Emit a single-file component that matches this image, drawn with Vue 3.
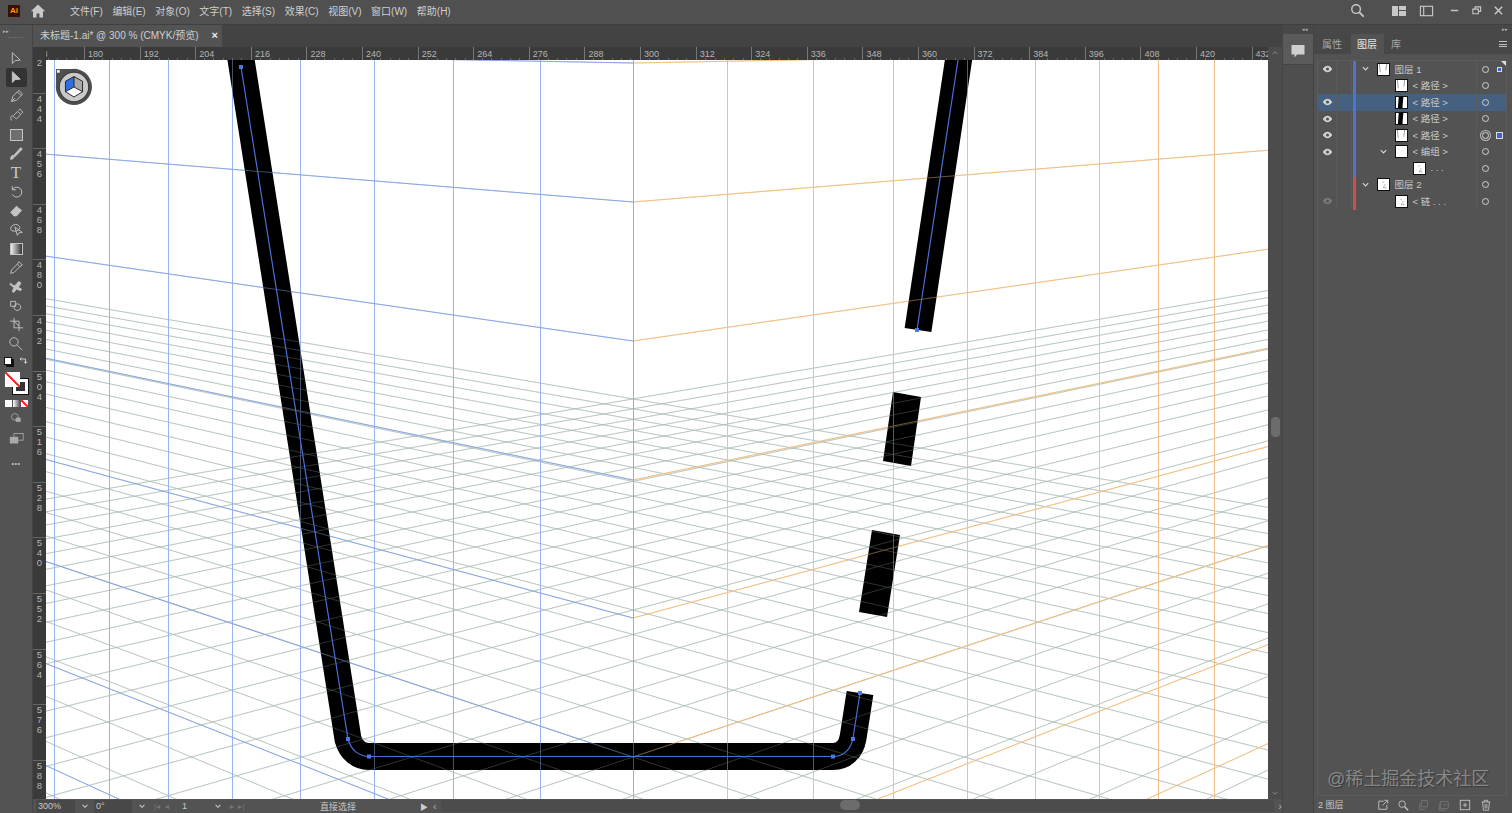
<template>
  <div class="app">
    <header class="titlebar">
      <div class="logo">Ai</div>
      <svg class="home" viewBox="0 0 16 16"><path d="M8 1.500 0.800 8.200h2.200V14.500h3.600v-4h2.800v4H13V8.200h2.200z" /></svg>
      <nav class="menu">
        <span v-for="item in menus" :key="item">{{ item }}</span>
      </nav>
      <div class="title-right">
        <svg class="ticon search" viewBox="0 0 16 16"><circle cx="6.500" cy="6.500" r="4.600" /><path d="M10 10l4.600 4.600" stroke-width="2" /></svg>
        <svg class="ticon layout" viewBox="0 0 16 14"><path class="solid" d="M1 2h6v10H1zM8 2h7v4H8zM8 7h7v5H8z" /></svg>
        <svg class="ticon window" viewBox="0 0 16 14"><rect x="1.500" y="2" width="13" height="10" /><path d="M5 2v10" /></svg>
        <svg class="ticon wbtn" viewBox="0 0 12 12"><path d="M2 6h8" stroke-width="1.600" /></svg>
        <svg class="ticon wbtn" viewBox="0 0 12 12"><path d="M2 4.500h6v5H2zM4.500 4.500V2h6v5H8" /></svg>
        <svg class="ticon wbtn last" viewBox="0 0 12 12"><path d="M2 2l8 8M10 2l-8 8" stroke-width="1.600" /></svg>
      </div>
    </header>

    <div class="body">
      <aside class="toolbar">
        <div class="collapse">▸▸</div>
        <div class="grip"></div>
        <div
          v-for="(tool, i) in tools"
          :key="i"
          class="tool"
          :class="{ active: i === 1 }"
        >
          <svg v-if="tool.d" viewBox="0 0 18 18" :class="{ filled: tool.filled }"><path :d="tool.d" /></svg>
          <div v-else-if="tool.box" class="tool-box" :class="tool.box"></div>
          <span v-else class="tool-t">T</span>
        </div>
        <div class="swap-row">
          <div class="mini-default"></div>
          <svg class="swap" viewBox="0 0 10 10"><path d="M2 3h5.500v4M6 5.500 7.500 7.500 9 5.500M3.500 1.500 2 3l1.500 1.500" /></svg>
        </div>
        <div class="fillstroke">
          <div class="stroke-box"></div>
          <div class="fill-box"></div>
        </div>
        <div class="modes">
          <i class="m-white"></i><i class="m-grad"></i><i class="m-none"></i>
        </div>
        <svg class="extra lock" viewBox="0 0 18 18"><circle cx="7" cy="7" r="4" /><rect class="solid" x="8" y="8" width="6" height="5" /></svg>
        <svg class="extra screens" viewBox="0 0 18 18"><rect x="6" y="3" width="11" height="8" /><rect class="solid" x="1" y="7" width="10" height="8" /></svg>
        <div class="more">•••</div>
      </aside>

      <main class="center">
        <div class="tabs">
          <div class="tab">
            <span>未标题-1.ai* @ 300 % (CMYK/预览)</span>
            <b>×</b>
          </div>
        </div>

        <div class="work">
          <div class="docarea">
            <div class="hruler">
              <div class="corner"></div>
              <div class="hticks">
                <div v-for="n in hLabels" :key="n" class="hcell">{{ n }}</div>
              </div>
            </div>
            <div class="mid">
              <div class="vruler">
                <div v-for="n in vLabels" :key="n" class="vcell">
                  <span v-for="(c, i) in String(n)" :key="i">{{ c }}</span>
                </div>
              </div>
              <div class="canvas">
                <svg class="art" viewBox="46 60 1222 739" width="1222" height="739">
                  <defs>
                    <g id="persp-grid" fill="none">
                      <line v-for="(l, i) in groundLines" :key="'g' + i" :x1="l.x1" :y1="l.y1" :x2="l.x2" :y2="l.y2" stroke="#a3b5ab" stroke-opacity="0.7" stroke-width="0.9" />
                      <line v-for="x in blueV" :key="'bv' + x" :x1="x + 0.5" y1="60" :x2="x + 0.5" y2="799" stroke="#97b4ee" />
                      <line v-for="x in orangeV" :key="'ov' + x" :x1="x + 0.5" y1="60" :x2="x + 0.5" y2="799" stroke="#f0c088" />
                      <line v-for="(l, i) in blueWall" :key="'bw' + i" :x1="l.x1" :y1="l.y1" :x2="l.x2" :y2="l.y2" stroke="#8ba8e4" />
                      <line v-for="(l, i) in orangeWall" :key="'ow' + i" :x1="l.x1" :y1="l.y1" :x2="l.x2" :y2="l.y2" stroke="#f2c084" />
                      <line x1="633.500" y1="60" x2="633.500" y2="799" stroke="#dca060" />
                    </g>
                  </defs>

                  <use href="#persp-grid" />

                  <g fill="none" stroke="#000" stroke-width="27">
                    <path d="M239.500 50 348 739C351 750 359 756.500 369 756.500H833C844 756.500 851 749 853 738L860 693" />
                    <path d="M960 50 918 330" />
                  </g>
                  <polygon points="893,392 921,397 911,466 883,461" />
                  <polygon points="872,530 900,535 887,617 859,612" />

                  <!-- the grid stays faintly visible through the artwork -->
                  <use href="#persp-grid" opacity="0.45" />

                  <g fill="none" stroke="#4a6fd8" stroke-width="1.200">
                    <path d="M241 67 348 739C351 750 359 756.500 369 756.500H833C844 756.500 851 749 853 738L860 693" />
                    <path d="M958 60 917 330" />
                  </g>
                  <g fill="#4a78dc">
                    <rect v-for="(p, i) in anchors" :key="i" :x="p[0] - 2" :y="p[1] - 2" width="4" height="4" />
                  </g>
                </svg>

                <svg class="plane-widget" viewBox="0 0 40 40">
                  <path d="M1 1h17a19 19 0 1 1-17 17z" fill="#4e4e4e" />
                  <circle cx="20" cy="20" r="15.500" fill="#c9c9c9" stroke="#3a3a3a" stroke-width="1.200" />
                  <path d="M20 9 29 14V25L20 20z" fill="#a9a9a9" />
                  <path d="M20 9 11 14V25L20 20z" fill="#2f6fe0" />
                  <path d="M20 20 29 25 20 30.500 11 25z" fill="#fff" />
                  <path d="M20 9 29 14V25L20 30.500 11 25V14zM20 9V20M11 25 20 20 29 25" fill="none" stroke="#222" stroke-width="1" />
                  <rect x="2" y="2" width="3" height="3" fill="#eee" />
                </svg>
              </div>
            </div>
          </div>
          <div class="vscroll">
            <svg viewBox="0 0 10 6"><path d="M2 5 5 2 8 5" /></svg>
            <div class="vthumb"></div>
            <svg viewBox="0 0 10 6"><path d="M2 1 5 4 8 1" /></svg>
          </div>
        </div>

        <footer class="status">
          <div class="field zoom">300%</div>
          <svg class="chev" viewBox="0 0 10 6"><path d="M2 1 5 4 8 1" /></svg>
          <div class="field rot">0°</div>
          <svg class="chev" viewBox="0 0 10 6"><path d="M2 1 5 4 8 1" /></svg>
          <span class="nav dim">|◂ &nbsp;◂</span>
          <span class="page">1</span>
          <svg class="chev" viewBox="0 0 10 6"><path d="M2 1 5 4 8 1" /></svg>
          <span class="nav dim">▸ &nbsp;▸|</span>
          <span class="mode">直接选择</span>
          <span class="nav play">▶</span>
          <span class="lt">‹</span>
          <div class="hscroll"><div class="hthumb"></div></div>
          <span class="rt">›</span>
        </footer>
      </main>

      <aside class="dock">
        <div class="dock-head">◂◂</div>
        <div class="comment">
          <svg viewBox="0 0 16 16"><path d="M1.500 2h13v9.500H7L4.500 14.500V11.500h-3z" /></svg>
        </div>
      </aside>

      <section class="panel">
        <div class="panel-head">▸▸</div>
        <div class="panel-tabs">
          <span>属性</span>
          <span class="on">图层</span>
          <span>库</span>
          <div class="burger"><i></i><i></i><i></i></div>
        </div>
        <div class="layers">
          <div
            v-for="(row, i) in rows"
            :key="i"
            class="row"
            :class="{ sel: row.sel }"
          >
            <div class="eye">
              <svg v-if="row.eye" viewBox="0 0 14 10" :class="{ faint: row.eye === 'dim' }">
                <path d="M1 5C3 2 5 1 7 1s4 1 6 4C11 8 9 9 7 9S3 8 1 5z" />
                <circle cx="7" cy="5" r="2" fill="#535353" />
              </svg>
            </div>
            <div class="lock-cell"></div>
            <i class="bar" :class="row.color"></i>
            <div class="content" :style="{ paddingLeft: 3 + row.level * 18 + 'px' }">
              <div class="arrow">
                <svg v-if="row.open" viewBox="0 0 10 6"><path d="M2 1 5 4 8 1" /></svg>
              </div>
              <div class="thumb">
                <svg v-if="row.thumb" viewBox="0 0 12 12">
                  <path v-if="row.thumb === 'black'" d="M3 0h5L7 12H2z" />
                  <path v-else-if="row.thumb === 'line'" d="M1 0 2 9h1L2 0zM9 0 8 7h1l1-7z" fill="#999" />
                  <path v-else d="M5 3h1v1H5zM7 6h1v1H7zM6 8h1v2H6zM8 9h1v1H8z" fill="#777" />
                </svg>
              </div>
              <span class="name">{{ row.name }}</span>
            </div>
            <div class="target"><i :class="{ double: row.double }"></i></div>
            <div class="mark"><i v-if="row.mark" :class="{ small: row.mark === 'small' }"></i></div>
          </div>
          <div class="watermark">@稀土掘金技术社区</div>
        </div>
        <div class="panel-foot">
          <span class="count">2 图层</span>
          <svg viewBox="0 0 14 14"><path d="M8 2.500H2v9.500h9.500V7M6.500 7.500 12 2M8.500 1.500H12.500V5.500" /></svg>
          <svg viewBox="0 0 14 14"><circle cx="6" cy="6" r="3.800" /><path d="M9 9l4 4" stroke-width="1.600" /></svg>
          <svg class="off" viewBox="0 0 14 14"><path d="M4 2h7v7H4zM2 5v7h7" /></svg>
          <svg class="off" viewBox="0 0 14 14"><path d="M3 3h9v8H3zM6 7h4M1.500 5v8h8" /></svg>
          <svg viewBox="0 0 14 14"><rect x="1.500" y="1.500" width="11" height="11" /><path d="M7 4.500v5M4.500 7h5" /></svg>
          <svg viewBox="0 0 14 14"><path d="M2 3.500h10M5 3.500V1.500h4v2M3 3.500 4 13h6l1-9.500M6 6v5M8 6v5" /></svg>
        </div>
      </section>
    </div>
  </div>
</template>

<script setup>
const menus = ["文件(F)", "编辑(E)", "对象(O)", "文字(T)", "选择(S)", "效果(C)", "视图(V)", "窗口(W)", "帮助(H)"];

const tools = [
  { d: "M4 2v13l3.500-3.500 6-.5z" },
  { d: "M4 2v13l3.500-3.500 6-.5z", filled: true },
  { d: "M3 15l1.500-6L10 3.500 14.500 8 9 13.500zM3 15l4-4M10 3.500 12 1.500 16 6 14.500 8" },
  { d: "M3 15c-2-4 0-7 2-5s4 3 4 3l5-5-3.500-4-5 5M11 3l2-2 3.500 4-2 2" },
  { box: "rect" },
  { d: "M2 16c0-3 1-5 3-5l1 2c0 2-2 3-4 3zM6 11 14 2l2 1.500L7 13z", filled: true },
  {},
  { d: "M4 7a6 6 0 1 1 0 5.500M4 2.500V7h4.500" },
  { d: "M2 11l7-7 6 5-6 6.500H6zM5.500 8l6 5", filled: true },
  { d: "M2 8c0-3 3-5 6-5s5 2 5 4-3 4-6 4-5-1-5-3zM7 6l3 10 2-3 4-.5z" },
  { box: "grad" },
  { d: "M2 16l1-4 7-7 3 3-7 7zM10 5l2-3 4 4-3 2" },
  { d: "M2 5c2 2 3 3 5 3l3-3a2 2 0 1 1 3 2l-2 3 4 2-1 2-5-2-3 4-2-1 2-5c-2-1-4-2-5-4z", filled: true },
  { d: "M2 4h6v6H2zM10 7a4 4 0 1 0 .01 0z" },
  { d: "M6 1v12h11M1 5h11v12M6 5l6 6" },
  { d: "M11 7a5 5 0 1 1-10 0 5 5 0 0 1 10 0zM10 11l6 6" },
];

// labels run every 12 pt of the ruler
const hLabels = [];
for (let n = 168; n <= 432; n += 12) hLabels.push(n);
const vLabels = [];
for (let n = 432; n <= 588; n += 12) vLabels.push(n);

const blueV = [54, 109, 168, 232, 300, 374, 453, 540];
const orangeV = [727, 813, 893, 967, 1035, 1099, 1158, 1214];

// both vanishing points sit on the same horizon, mirrored round x = 633
const HORIZON = 22;
const slopeAt = (c) => 0.000453 * (c - HORIZON);
const LEFT = 46;
const RIGHT = 1268;
const CORNER = 633;

const wallC = [63, 202, 341, 480, 618, 757, 896, 1035, 1174];
const blueWall = wallC.map((c) => ({
  x1: LEFT,
  y1: c - slopeAt(c) * (CORNER - LEFT),
  x2: CORNER,
  y2: c,
}));
const orangeWall = wallC.map((c) => ({
  x1: CORNER,
  y1: c,
  x2: RIGHT,
  y2: c - slopeAt(c) * (RIGHT - CORNER),
}));

const groundLines = [];
for (let m = 19.5; m >= 3; m -= 0.5) {
  const c = HORIZON + 7350 / m;
  const s = slopeAt(c);
  groundLines.push({ x1: LEFT, y1: c - s * (CORNER - LEFT), x2: RIGHT, y2: c + s * (RIGHT - CORNER) });
  groundLines.push({ x1: LEFT, y1: c + s * (CORNER - LEFT), x2: RIGHT, y2: c - s * (RIGHT - CORNER) });
}

const anchors = [
  [241, 67],
  [348, 739],
  [369, 756.5],
  [833, 756.5],
  [853, 739],
  [860, 693],
  [917, 330],
];

const rows = [
  { name: "图层 1", eye: true, color: "blue", level: 0, open: true, thumb: "line", mark: "small" },
  { name: "< 路径 >", color: "blue", level: 1, thumb: "line" },
  { name: "< 路径 >", eye: true, color: "blue", level: 1, thumb: "black", sel: true },
  { name: "< 路径 >", eye: true, color: "blue", level: 1, thumb: "black" },
  { name: "< 路径 >", eye: true, color: "blue", level: 1, thumb: "line", double: true, mark: "big" },
  { name: "< 编组 >", eye: true, color: "blue", level: 1, open: true },
  { name: ". . .", color: "blue", level: 2, thumb: "dots" },
  { name: "图层 2", color: "red", level: 0, open: true, thumb: "dots" },
  { name: "< 链 . . .", eye: "dim", color: "red", level: 1, thumb: "dots" },
];
</script>

<style>
html,
body {
  margin: 0;
  overflow: hidden;
  background: #535353;
}
</style>

<style scoped>
.app {
  display: flex;
  flex-direction: column;
  width: 1512px;
  height: 813px;
  overflow: hidden;
  background: #535353;
  color: #d0d0d0;
  font-family: "Liberation Sans", "Noto Sans CJK SC", sans-serif;
  font-size: 10px;
}

svg {
  display: block;
}

/* title bar */
.titlebar {
  display: flex;
  align-items: center;
  flex: 0 0 25px;
  box-sizing: border-box;
  padding-bottom: 3px;
  background: #505050;
  border-bottom: 1px solid #3f3f3f;
}
.logo {
  width: 12px;
  height: 12px;
  margin-left: 8px;
  background: #3a0f05;
  color: #ff9a00;
  font-size: 8px;
  font-weight: bold;
  line-height: 12px;
  text-align: center;
  border-radius: 1px;
}
.home {
  width: 16px;
  height: 16px;
  margin-left: 10px;
  fill: #c8c8c8;
}
.menu {
  display: flex;
  gap: 9.600px;
  margin-left: 24px;
  color: #cfcfcf;
  font-size: 10px;
}
.title-right {
  display: flex;
  align-items: center;
  margin-left: auto;
}
.ticon {
  fill: none;
  stroke: #c8c8c8;
  stroke-width: 1.200;
}
.ticon .solid {
  fill: #c8c8c8;
  stroke: none;
}
.search {
  width: 15px;
  height: 15px;
  margin-right: 26px;
  stroke-width: 1.500;
}
.layout {
  width: 16px;
  height: 14px;
  margin-right: 12px;
}
.window {
  width: 15px;
  height: 14px;
  margin-right: 15px;
}
.wbtn {
  width: 11px;
  height: 11px;
  margin-right: 11px;
}
.wbtn.last {
  margin-right: 8px;
}

.body {
  display: flex;
  flex: 1;
  min-height: 0;
}

/* left tools */
.toolbar {
  display: flex;
  flex-direction: column;
  align-items: center;
  flex: 0 0 32px;
  border-right: 1px solid #444;
}
.collapse {
  align-self: flex-start;
  height: 8px;
  margin: 2px 0 0 3px;
  font-size: 5px;
  color: #bbb;
  line-height: 8px;
}
.grip {
  width: 16px;
  height: 2px;
  margin: 2px 0 9px;
  border-top: 1px dotted #6e6e6e;
}
.tool {
  display: flex;
  align-items: center;
  justify-content: center;
  width: 21px;
  height: 19px;
  border-radius: 2px;
}
.tool.active {
  background: #333;
}
.tool svg {
  width: 15px;
  height: 15px;
  fill: none;
  stroke: #c4c4c4;
  stroke-width: 1.100;
}
.tool svg.filled {
  fill: #c4c4c4;
}
.tool-box {
  width: 11px;
  height: 10px;
  border: 1px solid #c4c4c4;
}
.tool-box.rect {
  background: #6e6e6e;
}
.tool-box.grad {
  background: linear-gradient(to right, #eee, #333);
}
.tool-t {
  color: #c8c8c8;
  font-family: "Liberation Serif", serif;
  font-size: 17px;
  line-height: 19px;
}
.swap-row {
  display: flex;
  align-items: center;
  justify-content: space-between;
  width: 24px;
  margin-top: 3px;
}
.mini-default {
  width: 6px;
  height: 6px;
  background: #fff;
  border: 1px solid #111;
  box-shadow: 2px 2px 0 #111;
}
.swap {
  width: 10px;
  height: 10px;
  fill: none;
  stroke: #ccc;
}
.fillstroke {
  position: relative;
  width: 23px;
  height: 22px;
  margin-top: 6px;
}
.fill-box {
  position: absolute;
  left: 0;
  top: 0;
  width: 15px;
  height: 15px;
  background: linear-gradient(to top right, #fff 44%, #e33 44%, #e33 56%, #fff 56%);
}
.stroke-box {
  position: absolute;
  right: 0;
  bottom: 0;
  width: 9px;
  height: 9px;
  border: 3px solid #fff;
  outline: 1px solid #111;
  background: #333;
}
.modes {
  display: flex;
  gap: 1px;
  margin-top: 6px;
}
.modes i {
  width: 7px;
  height: 7px;
}
.m-white {
  background: #fff;
}
.m-grad {
  background: linear-gradient(to right, #fff, #555);
}
.m-none {
  background: linear-gradient(to top right, #fff 42%, #e33 42%, #e33 58%, #fff 58%);
}
.extra {
  width: 15px;
  height: 15px;
  fill: none;
  stroke: #aaa;
}
.extra .solid {
  fill: #aaa;
  stroke: none;
}
.lock {
  margin-top: 4px;
}
.screens {
  margin-top: 5px;
}
.more {
  margin-top: 14px;
  font-size: 7px;
  letter-spacing: 0.5px;
  color: #c4c4c4;
}

/* centre */
.center {
  display: flex;
  flex-direction: column;
  flex: 0 0 1249px;
  min-width: 0;
}
.tabs {
  display: flex;
  flex: 0 0 22px;
  background: #434343;
}
.tab {
  display: flex;
  align-items: center;
  justify-content: space-between;
  width: 189px;
  padding: 0 4px 3px 7px;
  box-sizing: border-box;
  background: #535353;
  color: #cfcfcf;
  font-size: 10px;
  white-space: nowrap;
}
.tab b {
  font-size: 11px;
  color: #eee;
}
.work {
  display: flex;
  flex: 1;
  min-height: 0;
}
.docarea {
  display: flex;
  flex-direction: column;
  flex: 0 0 1235px;
  min-width: 0;
}
.hruler {
  display: flex;
  flex: 0 0 13px;
  background: #3a3a3a;
  overflow: hidden;
}
.corner {
  position: relative;
  z-index: 1;
  flex: 0 0 13px;
  background: #3a3a3a;
  border-right: 1px solid #2e2e2e;
  box-sizing: border-box;
}
.hticks {
  display: flex;
  margin-left: -17.500px;
}
.hcell {
  flex: 0 0 55.600px;
  box-sizing: border-box;
  height: 13px;
  padding-left: 3px;
  border-left: 1px solid #777;
  color: #b5b5b5;
  font-size: 9px;
  line-height: 14px;
  background: repeating-linear-gradient(to right, transparent 0, transparent 8.300px, #6a6a6a 8.300px, #6a6a6a 9.300px) bottom / 100% 2px no-repeat;
}
.mid {
  display: flex;
  flex: 1;
  min-height: 0;
}
.vruler {
  flex: 0 0 13px;
  background: #3a3a3a;
  overflow: hidden;
}
.vcell {
  display: flex;
  flex-direction: column;
  align-items: center;
  box-sizing: border-box;
  height: 55.600px;
  border-top: 1px solid #666;
  color: #b5b5b5;
  font-size: 9.500px;
  line-height: 10px;
}
.vcell:first-child {
  margin-top: -23px;
}
.canvas {
  position: relative;
  flex: 1;
  background: #fff;
  overflow: hidden;
}
.plane-widget {
  position: absolute;
  left: 9px;
  top: 8px;
  width: 38px;
  height: 38px;
}
.vscroll {
  display: flex;
  flex-direction: column;
  align-items: center;
  justify-content: space-between;
  flex: 0 0 14px;
  padding: 3px 0;
  box-sizing: border-box;
  background: #4c4c4c;
}
.vscroll svg {
  width: 8px;
  height: 5px;
  fill: none;
  stroke: #999;
}
.vthumb {
  width: 9px;
  height: 20px;
  border-radius: 4px;
  background: #6c6c6c;
  margin-top: 8px;
}
.status {
  display: flex;
  align-items: center;
  flex: 0 0 14px;
  color: #c8c8c8;
  font-size: 9px;
  white-space: nowrap;
}
.field {
  box-sizing: border-box;
  height: 13px;
  padding-left: 2px;
  background: #484848;
  line-height: 13px;
}
.zoom {
  width: 39px;
  margin-left: 3px;
}
.rot {
  width: 38px;
}
.chev {
  flex: 0 0 auto;
  width: 8px;
  height: 5px;
  margin: 0 5px 0 6px;
  fill: none;
  stroke: #ccc;
  stroke-width: 1.300;
}
.nav {
  font-size: 8px;
}
.dim {
  margin-left: 3px;
  color: #777;
  width: 26px;
}
.page {
  width: 26px;
  margin-left: 2px;
}
.mode {
  width: 164px;
  box-sizing: border-box;
  padding-left: 64px;
}
.play {
  color: #ccc;
  width: 13px;
}
.lt,
.rt {
  color: #aaa;
  font-size: 11px;
  line-height: 12px;
}
.hscroll {
  display: flex;
  justify-content: center;
  flex: 1;
  height: 12px;
  background: #4c4c4c;
  margin: 0 4px;
}
.hthumb {
  width: 20px;
  height: 10px;
  border-radius: 5px;
  background: #6c6c6c;
  margin-left: -16px;
}

/* right dock */
.dock {
  flex: 0 0 32px;
  border-left: 1px solid #444;
  border-right: 1px solid #444;
  box-sizing: border-box;
  background: #4e4e4e;
}
.dock-head {
  height: 9px;
  font-size: 5px;
  line-height: 9px;
  text-align: right;
  padding-right: 5px;
  color: #bbb;
  background: #484848;
}
.comment {
  display: flex;
  align-items: center;
  justify-content: center;
  box-sizing: border-box;
  height: 31px;
  padding-top: 4px;
  background: #5a5a5a;
  border-bottom: 1px solid #444;
}
.comment svg {
  width: 16px;
  height: 16px;
  fill: #cfcfcf;
}

/* layers panel */
.panel {
  display: flex;
  flex-direction: column;
  flex: 0 0 198px;
  min-width: 0;
}
.panel-head {
  height: 9px;
  font-size: 5px;
  line-height: 9px;
  text-align: right;
  padding-right: 4px;
  color: #bbb;
  background: #484848;
}
.panel-tabs {
  display: flex;
  align-items: stretch;
  flex: 0 0 20px;
  padding-left: 1px;
  background: #474747;
  color: #a8a8a8;
  font-size: 10px;
}
.panel-tabs span {
  display: flex;
  align-items: center;
  padding: 0 7px 2px;
}
.panel-tabs span.on {
  padding: 0 7px 2px 6px;
  margin-left: 2px;
  background: #535353;
  color: #e6e6e6;
}
.burger {
  display: flex;
  flex-direction: column;
  justify-content: center;
  gap: 1.500px;
  width: 8px;
  margin-left: auto;
  margin-right: 5px;
}
.burger i {
  height: 1px;
  background: #c4c4c4;
}
.layers {
  position: relative;
  flex: 1;
  margin: 6px 5px 0 3px;
  border: 1px solid #5c5c5c;
  box-sizing: border-box;
}
.layers::before {
  content: "";
  position: absolute;
  right: 0;
  top: 0;
  border-top: 5px solid #ddd;
  border-left: 5px solid transparent;
}
.row {
  display: flex;
  align-items: center;
  height: 16.500px;
}
.row.sel {
  background: #46607f;
}
.eye {
  display: flex;
  justify-content: center;
  flex: 0 0 17px;
  margin-left: 1px;
}
.eye svg {
  width: 11px;
  height: 8px;
  fill: #d4d4d4;
}
.eye svg.faint {
  opacity: 0.3;
}
.lock-cell {
  flex: 0 0 16px;
  align-self: stretch;
  border-left: 1px solid #5a5a5a;
  border-right: 1px solid #5a5a5a;
  box-sizing: border-box;
}
.bar {
  flex: 0 0 2.500px;
  align-self: stretch;
  margin-left: 1px;
}
.bar.blue {
  background: #4e74d0;
}
.bar.red {
  background: #d04d4d;
}
.content {
  display: flex;
  align-items: center;
  flex: 1;
  min-width: 0;
}
.arrow {
  display: flex;
  justify-content: center;
  flex: 0 0 18px;
}
.arrow svg {
  width: 9px;
  height: 6px;
  margin-right: 4px;
  fill: none;
  stroke: #d8d8d8;
  stroke-width: 1.200;
}
.thumb {
  flex: 0 0 13px;
  height: 13px;
  box-sizing: border-box;
  border: 1px solid #111;
  background: #fff;
}
.thumb svg {
  width: 100%;
  height: 100%;
}
.name {
  margin: -1px 0 0 5px;
  color: #c8c8c8;
  font-size: 9.500px;
  white-space: nowrap;
}
.target {
  display: flex;
  align-items: center;
  justify-content: center;
  flex: 0 0 17px;
  align-self: stretch;
  border-left: 1px solid #5a5a5a;
  box-sizing: border-box;
}
.target i {
  width: 5px;
  height: 5px;
  border: 1px solid #cfcfcf;
  border-radius: 50%;
}
.target i.double {
  box-shadow: 0 0 0 1px #535353, 0 0 0 2px #bbb;
}
.mark {
  display: flex;
  align-items: center;
  justify-content: center;
  flex: 0 0 13px;
}
.mark i {
  width: 5px;
  height: 5px;
  background: #3c62d0;
  border: 1px solid #ddd;
}
.mark i.small {
  width: 3px;
  height: 3px;
}
.watermark {
  position: absolute;
  left: 9px;
  bottom: 5px;
  color: rgba(190, 190, 190, 0.55);
  font-size: 18px;
  line-height: 22px;
  white-space: nowrap;
  text-shadow: 1px 1px 1px rgba(40, 40, 40, 0.6);
}
.panel-foot {
  display: flex;
  align-items: center;
  flex: 0 0 17px;
  padding-left: 4px;
  gap: 8.600px;
}
.panel-foot svg {
  flex: 0 0 12px;
  width: 12px;
  height: 12px;
  fill: none;
  stroke: #c8c8c8;
}
.panel-foot svg.off {
  stroke: #777;
}
.count {
  width: 50px;
  font-size: 9px;
  color: #c8c8c8;
}
</style>
